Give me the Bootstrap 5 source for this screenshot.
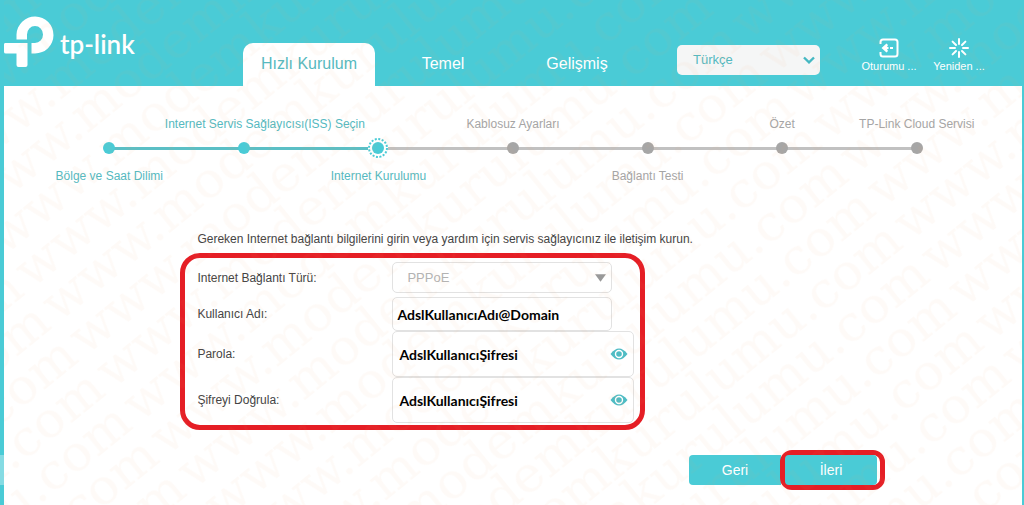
<!DOCTYPE html>
<html lang="tr">
<head>
<meta charset="utf-8">
<meta name="viewport" content="width=device-width, initial-scale=1">
<title>TP-Link - Hızlı Kurulum</title>
<link rel="stylesheet" href="https://cdn.jsdelivr.net/npm/bootstrap@5.3.0/dist/css/bootstrap.min.css">
<style>
  :root { --teal: #4acbd6; --teal-text: #55b9c0; --red: #e51e25; }
  body { font-family: "Liberation Sans", Arial, sans-serif; font-size: 12px; line-height: 16px; color: #444; background: #fff; }
  .page { border: solid var(--teal); border-width: 0 2px 0 4px; overflow: hidden; }
  .topbar { background: var(--teal); height: 86px; padding-right: 28px; }
  .brand-name { font-family: Lato, sans-serif; font-weight: 600; font-size: 26px; line-height: 28px; }
  .brand-link { width: 239px; padding-top: 14px; }
  .main-tabs { gap: 2px; }
  .main-tabs .nav-link { width: 132px; height: 43px; padding: 0; font-size: 16px; line-height: 41px; text-align: center; color: #fff; border-radius: 10px 10px 0 0; }
  .main-tabs .nav-link.active { background: #fff; color: var(--teal-text); }
  .lang-select { width: 143px; height: 30px; margin-bottom: 11px; padding: 0 32px 0 16px; border: 0; border-radius: 5px; color: var(--teal-text); background-color: #f5f6f6; font-size: 13px; line-height: 30px;
    background-image: url("data:image/svg+xml,%3Csvg xmlns='http://www.w3.org/2000/svg' viewBox='0 0 12 8'%3E%3Cpath d='M1 1.5 6 6.300 11 1.500' fill='none' stroke='%2345b8c2' stroke-width='2.400'/%3E%3C/svg%3E");
    background-size: 12px 8px; background-position: right 5px center; }
  .tools { margin-bottom: 12px; padding-left: 34px; }
  .tool-btn { width: 70px; padding: 0; border: 0; color: #fff; background: none; font-size: 11px; line-height: 16px; }
  .steps { padding: 30px 38px 0; }
  .step { flex: 1 1 0; min-width: 0; color: #a5a5a5; }
  .step.done { color: var(--teal-text); }
  .step-label { height: 16px; white-space: nowrap; }
  .wide-label { padding-left: 42px; }
  .rail { height: 20px; margin: 6px 0 10px; }
  .rail i { flex: 1; height: 3px; background: #c1c1c1; }
  .rail i.on { background: #5bbfc5; }
  .rail i.off { background: none; }
  .rail b { width: 12px; height: 12px; border-radius: 50%; background: #a6a6a6; margin: 0 -6px; z-index: 1; }
  .done .rail b { background: var(--teal); }
  .setup { width: 505px; max-width: 100%; margin-left: 19%; padding-top: 47px; }
  .hint { white-space: nowrap; }
  .marked { width: 465px; margin: 6px 0 0 -17px; padding: 4px 6px 2px 12px; border: 5px solid var(--red); border-radius: 20px; }
  .field-label { width: 195px; }
  .field { border: 1px solid #e2e2e2; border-radius: 5px; background-color: #fff; padding: 0 4px; width: 220px; }
  .field-type { height: 31px; padding-left: 14px; font-size: 13px; background-image: url("data:image/svg+xml,%3Csvg xmlns='http://www.w3.org/2000/svg' viewBox='0 0 12 8'%3E%3Cpath d='M0 0H12L6 8Z' fill='%23999'/%3E%3C/svg%3E");
    background-size: 11px 8px; background-position: right 5px center; }
  .field-type:disabled { background-color: #fff; opacity: 1; color: #b3b3b3; }
  .field-text { height: 34px; font-family: Lato, sans-serif; font-weight: 700; font-size: 14px; color: #000; }
  .field-pass { width: 242px; height: 46px; padding: 0 30px 0 6px; }
  .eye { right: 6px; padding: 0; border: 0; background: none; line-height: 0; color: #4fbcc4; }
  .actions { padding: 20px 137px 18px 0; }
  .wizard-btn { width: 92px; height: 30px; padding: 0; border: 0; border-radius: 4px; color: #fff; background: var(--teal); font-size: 14px; line-height: 28px; }
  .marked-btn { padding: 0 3px 0 0; border: 5px solid var(--red); border-radius: 12px; margin-left: -1px; }
  .side-handle { left: 0; top: 455px; width: 4px; height: 30px; background: #85dbe3; }
  .watermark { inset: 0; width: 100%; height: 100%; pointer-events: none; z-index: 5; }
</style>
</head>
<body>
<div class="page position-relative min-vh-100">
  <header class="topbar d-flex align-items-end">
    <a href="#" class="brand-link d-flex align-self-start text-white text-decoration-none" aria-label="tp-link">
      <svg width="52" height="54" viewBox="0 0 52 54" fill="#fff" aria-hidden="true">
        <path d="M12.500 25.500V20.500A18.500 18.500 0 1 1 31 39.500H27.500V29H31A8 8.500 0 1 0 23 20.500V25.500Z"/>
        <path d="M1 29H23.500V51Q23.500 53 21.500 53H14.500Q12.500 53 12.500 51V39.500H2Q0 39.500 0 38V30.500Q0 29 1 29Z"/>
      </svg>
      <span class="brand-name pt-3 ps-1">tp-link</span>
    </a>
    <nav class="nav main-tabs flex-nowrap me-auto" aria-label="Ana menü">
      <a class="nav-link active" href="#" aria-current="page">Hızlı Kurulum</a>
      <a class="nav-link" href="#">Temel</a>
      <a class="nav-link" href="#">Gelişmiş</a>
    </nav>
    <select class="form-select lang-select" aria-label="Dil"><option>Türkçe</option></select>
    <div class="tools d-flex">
      <button type="button" class="tool-btn">
        <svg class="d-block mx-auto" width="20" height="20" viewBox="0 0 20 20" fill="none" stroke="#fff" stroke-width="2" aria-hidden="true">
          <path d="M1.500 6V4Q1.500 1.500 4 1.500H16Q18.500 1.500 18.500 4V16Q18.500 18.500 16 18.500H4Q1.500 18.500 1.500 16V14"/>
          <path d="M2.500 10 7.500 5.500 9 7 8 9H9.500V11H8L9 13 7.500 14.500Z" fill="#fff" stroke="none"/><path d="M11 10H14"/>
        </svg>
        Oturumu ...
      </button>
      <button type="button" class="tool-btn">
        <svg class="d-block mx-auto" width="20" height="20" viewBox="0 0 20 20" fill="none" stroke="#fff" stroke-width="2" stroke-linecap="round" aria-hidden="true">
          <path d="M10 1V6M10 14V19M1 10H6M14 10H19M3.600 3.600 7 7M13 13 16.400 16.400M3.600 16.400 7 13M13 7 16.400 3.600"/>
        </svg>
        Yeniden ...
      </button>
    </div>
  </header>

  <main>
    <section class="steps d-flex text-center" aria-label="Kurulum adımları">
      <div class="step done">
        <div class="step-label"></div>
        <div class="rail d-flex align-items-center"><i class="off"></i><b></b><i class="on"></i></div>
        <div class="step-label">Bölge ve Saat Dilimi</div>
      </div>
      <div class="step done">
        <div class="step-label d-flex justify-content-center"><span class="wide-label">Internet Servis Sağlayıcısı(ISS) Seçin</span></div>
        <div class="rail d-flex align-items-center"><i class="on"></i><b></b><i class="on"></i></div>
      </div>
      <div class="step done">
        <div class="step-label"></div>
        <div class="rail d-flex align-items-center"><i class="on"></i>
          <svg width="20" height="20" viewBox="0 0 20 20" aria-hidden="true"><circle cx="10" cy="10" r="10" fill="#fff"/><circle cx="10" cy="10" r="9" fill="none" stroke="#4acbd6" stroke-width="2" stroke-dasharray="2 1.534"/><circle cx="10" cy="10" r="6" fill="#4acbd6"/></svg>
          <i></i></div>
        <div class="step-label">Internet Kurulumu</div>
      </div>
      <div class="step">
        <div class="step-label">Kablosuz Ayarları</div>
        <div class="rail d-flex align-items-center"><i></i><b></b><i></i></div>
      </div>
      <div class="step">
        <div class="step-label"></div>
        <div class="rail d-flex align-items-center"><i></i><b></b><i></i></div>
        <div class="step-label">Bağlantı Testi</div>
      </div>
      <div class="step">
        <div class="step-label">Özet</div>
        <div class="rail d-flex align-items-center"><i></i><b></b><i></i></div>
      </div>
      <div class="step">
        <div class="step-label">TP-Link Cloud Servisi</div>
        <div class="rail d-flex align-items-center"><i></i><b></b><i class="off"></i></div>
      </div>
    </section>

    <form>
      <div class="setup">
        <p class="hint mb-0">Gereken Internet bağlantı bilgilerini girin veya yardım için servis sağlayıcınız ile iletişim kurun.</p>
        <div class="marked">
          <div class="d-flex align-items-center">
            <label class="field-label" for="type">Internet Bağlantı Türü:</label>
            <select id="type" class="form-select field field-type" disabled><option>PPPoE</option></select>
          </div>
          <div class="d-flex align-items-center pt-1">
            <label class="field-label" for="user">Kullanıcı Adı:</label>
            <input id="user" type="text" class="field field-text" value="AdslKullanıcıAdı@Domain">
          </div>
          <div class="d-flex align-items-center">
            <label class="field-label" for="pass">Parola:</label>
            <div class="position-relative d-flex align-items-center">
              <input id="pass" type="text" class="field field-text field-pass" value="AdslKullanıcıŞifresi">
              <button type="button" class="eye position-absolute" aria-label="Parolayı göster">
                <svg width="18" height="12" viewBox="0 0 18 12"><path d="M0.500 6Q9-5 17.500 6Q9 17 0.500 6Z" fill="currentColor"/><circle cx="9" cy="6" r="3.500" fill="none" stroke="#fff" stroke-width="1.400"/></svg>
              </button>
            </div>
          </div>
          <div class="d-flex align-items-center">
            <label class="field-label" for="pass2">Şifreyi Doğrula:</label>
            <div class="position-relative d-flex align-items-center">
              <input id="pass2" type="text" class="field field-text field-pass" value="AdslKullanıcıŞifresi">
              <button type="button" class="eye position-absolute" aria-label="Şifreyi göster">
                <svg width="18" height="12" viewBox="0 0 18 12"><path d="M0.500 6Q9-5 17.500 6Q9 17 0.500 6Z" fill="currentColor"/><circle cx="9" cy="6" r="3.500" fill="none" stroke="#fff" stroke-width="1.400"/></svg>
              </button>
            </div>
          </div>
        </div>
      </div>
      <div class="actions d-flex justify-content-end align-items-center">
        <button type="button" class="wizard-btn rounded-end-0">Geri</button>
        <div class="marked-btn"><button type="submit" class="wizard-btn d-block">İleri</button></div>
      </div>
    </form>
  </main>

  <div class="side-handle position-fixed"></div>
  <svg class="watermark position-absolute" aria-hidden="true">
    <defs>
      <pattern id="wm" width="713" height="43" patternUnits="userSpaceOnUse" patternTransform="translate(48 107) rotate(-39) translate(-131 -33)">
        <g font-family="DejaVu Serif, serif" font-size="51" fill="#f0a060" fill-opacity=".05">
          <text x="0" y="33">www.modemkurulumu.com</text>
          <text x="0" y="76">www.modemkurulumu.com</text>
          <text x="0" y="-10">www.modemkurulumu.com</text>
        </g>
      </pattern>
    </defs>
    <rect width="100%" height="100%" fill="url(#wm)"/>
  </svg>
</div>
<script src="https://cdn.jsdelivr.net/npm/bootstrap@5.3.0/dist/js/bootstrap.bundle.min.js"></script>
</body>
</html>
